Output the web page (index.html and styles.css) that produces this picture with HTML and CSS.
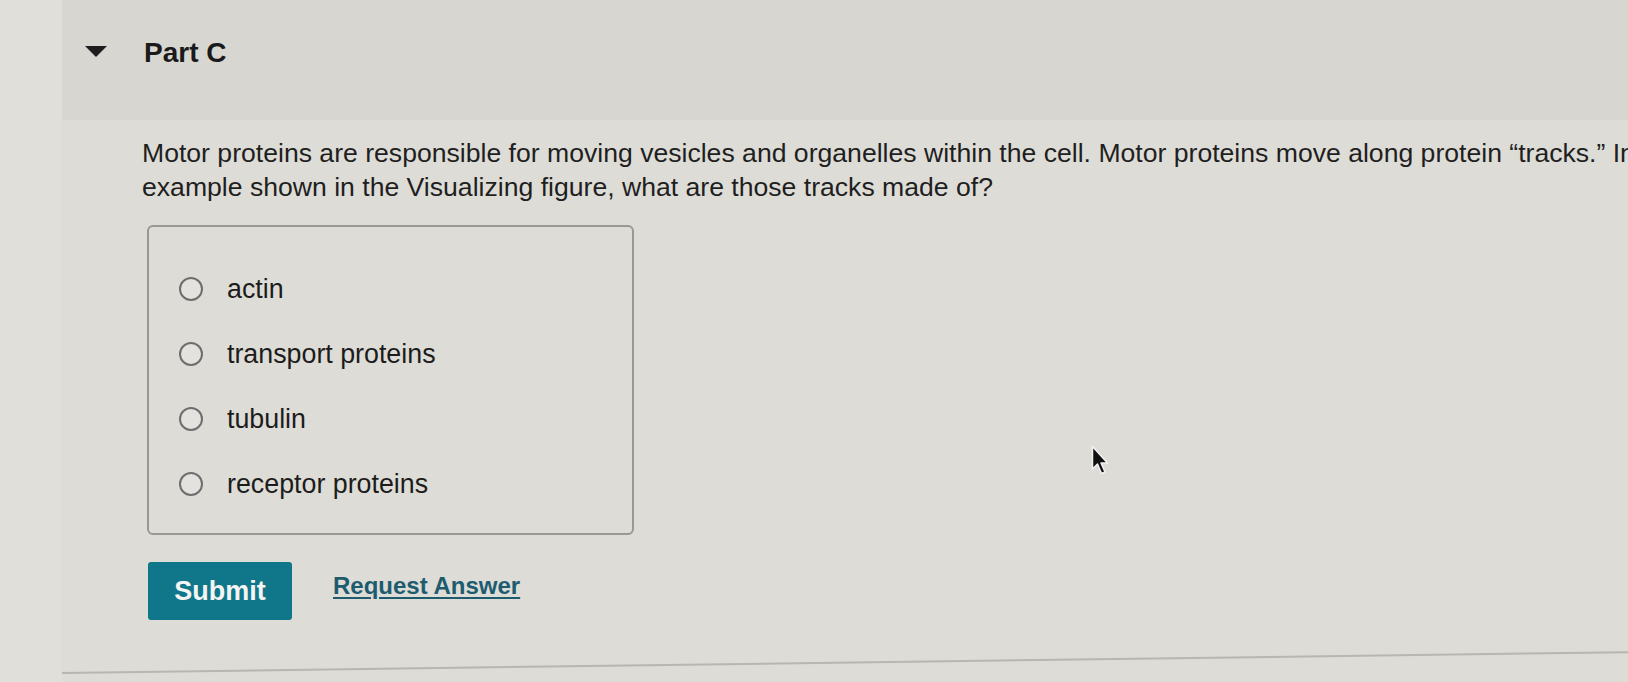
FILE: index.html
```html
<!DOCTYPE html>
<html lang="en">
<head>
<meta charset="utf-8">
<title>Part C</title>
<link rel="stylesheet" href="styles.css">
</head>
<body>
<div class="page">
  <aside class="gutter"></aside>
  <main class="panel">
    <header class="part-head">
      <svg class="caret" width="22" height="11" viewBox="0 0 22 11"><path d="M0 0 H22 L11 11 Z" fill="#1e1e1e"/></svg>
      <h2 class="part-title">Part C</h2>
    </header>
    <section class="part-body">
      <p class="question">Motor proteins are responsible for moving vesicles and organelles within the cell. Motor proteins move along protein “tracks.” In the<br>example shown in the Visualizing figure, what are those tracks made of?</p>
      <div class="choices">
        <label class="choice"><span class="radio"></span><span class="choice-text">actin</span></label>
        <label class="choice"><span class="radio"></span><span class="choice-text">transport proteins</span></label>
        <label class="choice"><span class="radio"></span><span class="choice-text">tubulin</span></label>
        <label class="choice"><span class="radio"></span><span class="choice-text">receptor proteins</span></label>
      </div>
      <div class="actions">
        <button class="submit" type="button">Submit</button>
        <a class="request" href="#">Request Answer</a>
      </div>
    </section>
    <div class="rule"></div>
  </main>
</div>
<svg class="cursor" width="19" height="31" viewBox="0 0 19 31"><path d="M1.5 1.5 L1.5 24 L6.5 19 L10.5 28.5 L14 27 L10 18 L16.5 18 Z" fill="#111" stroke="#f2f2f2" stroke-width="1.5" stroke-linejoin="round"/></svg>
</body>
</html>
```

FILE: styles.css
```css
html, body {
  margin: 0;
  padding: 0;
}
body {
  width: 1628px;
  height: 682px;
  overflow: hidden;
  background: #dfddd8;
  font-family: "Liberation Sans", Arial, Helvetica, sans-serif;
  color: #1e1e1e;
  position: relative;
}
.page {
  display: flex;
  height: 682px;
}
.gutter {
  width: 62px;
  flex: none;
  background: #e1dfda;
}
.panel {
  flex: 1;
  min-width: 0;
  background: #dedcd7;
}
.part-head {
  height: 120px;
  box-sizing: border-box;
  background: #d8d6d1;
  display: flex;
  align-items: flex-start;
  padding: 37px 0 0 23px;
}
.caret {
  margin-top: 9px;
  flex: none;
}
.part-title {
  margin: 0 0 0 37px;
  font-size: 28px;
  line-height: 32px;
  font-weight: bold;
  color: #1a1a1a;
}
.part-body {
  padding-left: 80px;
}
.question {
  margin: 16px 0 0 0;
  font-size: 26.6px;
  line-height: 34px;
  white-space: nowrap;
  color: #1f1f1f;
}
.choices {
  margin: 21px 0 0 5px;
  width: 487px;
  height: 310px;
  box-sizing: border-box;
  border: 2px solid #9a9893;
  border-radius: 6px;
  padding: 29px 0 0 30px;
  display: flex;
  flex-direction: column;
}
.choice {
  height: 65px;
  display: flex;
  align-items: center;
  cursor: pointer;
}
.radio {
  width: 24px;
  height: 24px;
  box-sizing: border-box;
  border: 2px solid #6e6e6e;
  border-radius: 50%;
  flex: none;
  background: #e4e2de;
}
.choice-text {
  margin-left: 24px;
  font-size: 26.8px;
  line-height: 30px;
  color: #1c1c1c;
}
.actions {
  margin: 27px 0 0 6px;
  display: flex;
  align-items: center;
}
.submit {
  width: 144px;
  height: 58px;
  border: none;
  border-radius: 3px;
  background: #0f7789;
  color: #f4f4f4;
  font-family: "Liberation Sans", Arial, sans-serif;
  font-size: 27px;
  font-weight: bold;
  padding: 0;
}
.request {
  margin-left: 41px;
  margin-top: -10px;
  font-size: 24px;
  font-weight: bold;
  color: #1d5c6f;
  text-decoration: underline;
  text-underline-offset: 3px;
}
.rule {
  margin-top: 52px;
  height: 0;
  border-top: 2px solid #b8b6b1;
  transform: rotate(-0.76deg);
  transform-origin: left top;
  width: 1600px;
}
.cursor {
  position: absolute;
  left: 1091px;
  top: 445px;
}
```
